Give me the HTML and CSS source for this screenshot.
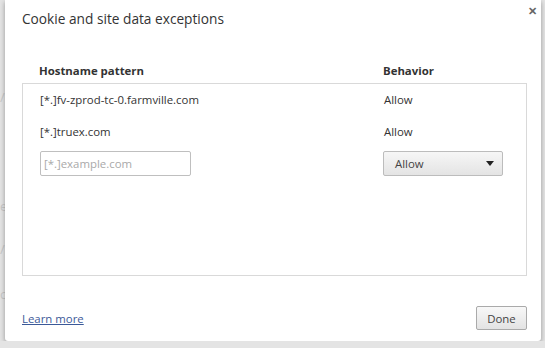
FILE: index.html
```html
<!DOCTYPE html>
<html lang="en">
<head>
    <meta charset="UTF-8">
    <title>Cookie and site data exceptions</title>
    <link rel="stylesheet" href="styles.css">
</head>
<body>
    <div class="backdrop">
        <span class="ghost g1">/</span>
        <span class="ghost g2">e</span>
        <span class="ghost g3">/</span>
        <span class="ghost g4">c</span>
    </div>

    <div class="dialog">
        <div class="title-bar">
            <h1 class="title">Cookie and site data exceptions</h1>
            <span class="close">&#x2715;</span>
        </div>

        <div class="columns">
            <span class="col-host">Hostname pattern</span>
            <span class="col-behavior">Behavior</span>
        </div>

        <div class="list">
            <div class="row">
                <span class="col-host">[*.]fv-zprod-tc-0.farmville.com</span>
                <span class="col-behavior">Allow</span>
            </div>
            <div class="row">
                <span class="col-host">[*.]truex.com</span>
                <span class="col-behavior">Allow</span>
            </div>
            <div class="row edit-row">
                <span class="col-host"><input type="text" class="pattern-input" placeholder="[*.]example.com"></span>
                <span class="col-behavior">
                    <span class="select">Allow<span class="arrow"></span></span>
                </span>
            </div>
        </div>

        <div class="footer">
            <a href="#" class="learn-more">Learn more</a>
            <button class="button">Done</button>
        </div>
    </div>
</body>
</html>
```

FILE: styles.css
```css
body { margin: 0; background: #e4e4e4; font-family: "Open Sans", "Noto Sans", sans-serif; color: #333; overflow: hidden; }
.backdrop { position: absolute; left: 0; top: 0; width: 6px; height: 348px; }
.ghost { position: absolute; left: 0; font-size: 13px; color: #c8c8c8; }
.g1 { top: 88px; } .g2 { top: 197px; } .g3 { top: 240px; } .g4 { top: 285px; }

.dialog { position: relative; margin-left: 5px; width: 536px; height: 341px; background: #fff; border-radius: 0 0 3px 3px; box-shadow: 0 2px 5px rgba(0,0,0,0.35); box-sizing: border-box; padding: 0 14px 0 17px; display: flex; flex-direction: column; }

.title-bar { display: flex; justify-content: space-between; align-items: flex-start; height: 60px; }
.title { margin: 9px 0 0; font-size: 13.7px; font-weight: normal; color: #333; }
.close { font-size: 11px; font-weight: bold; color: #666; margin: 3px -10px 0 0; }

.columns, .row { display: flex; align-items: center; font-size: 11.4px; }
.columns { font-weight: bold; height: 23px; align-items: flex-start; padding-top: 3px; box-sizing: border-box; }
.col-host { width: 361px; padding-left: 17px; box-sizing: border-box; }
.col-behavior { flex: 1; }

.list { border: 1px solid #d9d9d9; height: 193px; box-sizing: border-box; }
.row { height: 32px; }
.row:first-child { margin-top: -1px; }
.edit-row { height: 26px; margin-top: 3px; }
.pattern-input { width: 151px; height: 25px; box-sizing: border-box; border: 1px solid #bfbfbf; border-radius: 2px; font: inherit; font-size: 11.4px; padding: 0 3px; }
.pattern-input::placeholder { color: #a9a9a9; }
.select { display: flex; justify-content: space-between; align-items: center; width: 120px; height: 25px; box-sizing: border-box; margin-left: -1px; padding: 0 8px 0 11px; border: 1px solid #bcbcbc; border-radius: 2px; background: linear-gradient(#f6f6f6, #e4e4e4); color: #444; }
.arrow { width: 0; height: 0; border-left: 4px solid transparent; border-right: 4px solid transparent; border-top: 5px solid #222; }

.footer { display: flex; justify-content: space-between; align-items: center; margin-top: 30px; }
.learn-more { font-size: 11.4px; color: #3b5998; text-decoration: underline; }
.button { width: 51px; height: 24px; font: inherit; font-size: 11.4px; color: #444; border: 1px solid #aaa; border-radius: 2px; background: linear-gradient(#f8f8f8, #e3e3e3); padding: 0; margin-right: 0; }
```
